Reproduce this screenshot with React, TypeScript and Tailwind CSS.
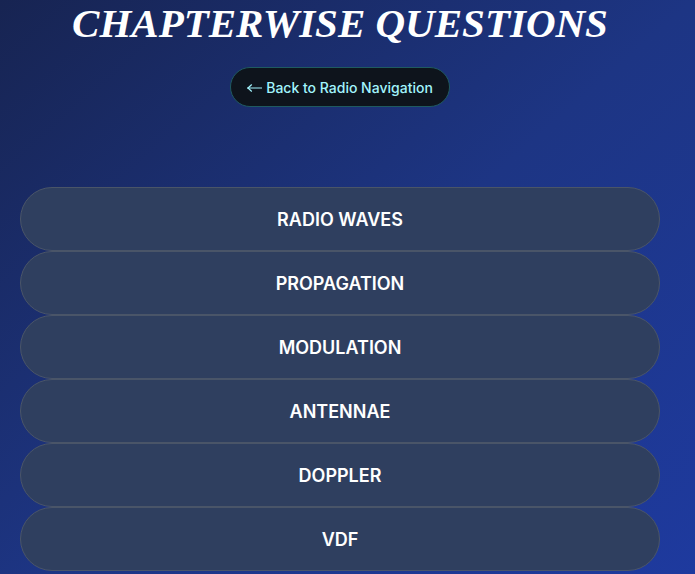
import React from "react";

const chapters = ["RADIO WAVES", "PROPAGATION", "MODULATION", "ANTENNAE", "DOPPLER", "VDF"];

export default function App() {
  return (
    <div className="min-h-[574px] w-full bg-gradient-to-br from-[#172452] via-[#1d3584] to-[#1e3aa0] pl-5 pr-[35px] pb-10" style={{ fontFamily: "Inter, 'Noto Sans', sans-serif" }}>
      <div className="flex flex-col items-center">
        <h1
          className="mt-0 text-[41px] leading-[46px] font-bold italic text-white"
          style={{ fontFamily: "'Liberation Serif', 'Times New Roman', serif" }}
        >
          CHAPTERWISE QUESTIONS
        </h1>
        <button className="mt-[21px] h-10 px-[16px] rounded-full bg-[#0e141c] border border-[#1f5a60] text-[14px] font-medium text-cyan-200 flex items-center">
          <svg width="15" height="10" viewBox="0 0 15 10" className="mt-[1px]" fill="none" stroke="currentColor" strokeWidth="1.2" strokeLinecap="round">
            <path d="M1 5 H14.5" />
            <path d="M1 5 L4.5 1.8" />
            <path d="M1 5 L4.5 8.2" />
          </svg>
          <span className="ml-[4px]">Back to Radio Navigation</span>
        </button>
      </div>
      <div className="mt-20 flex flex-col">
        {chapters.map((c) => (
          <div
            key={c}
            className="h-16 w-full rounded-full bg-[#2f3f5f] border border-[#4a5568] flex items-center justify-center text-[18px] font-semibold text-white"
          >
            {c}
          </div>
        ))}
      </div>
    </div>
  );
}
